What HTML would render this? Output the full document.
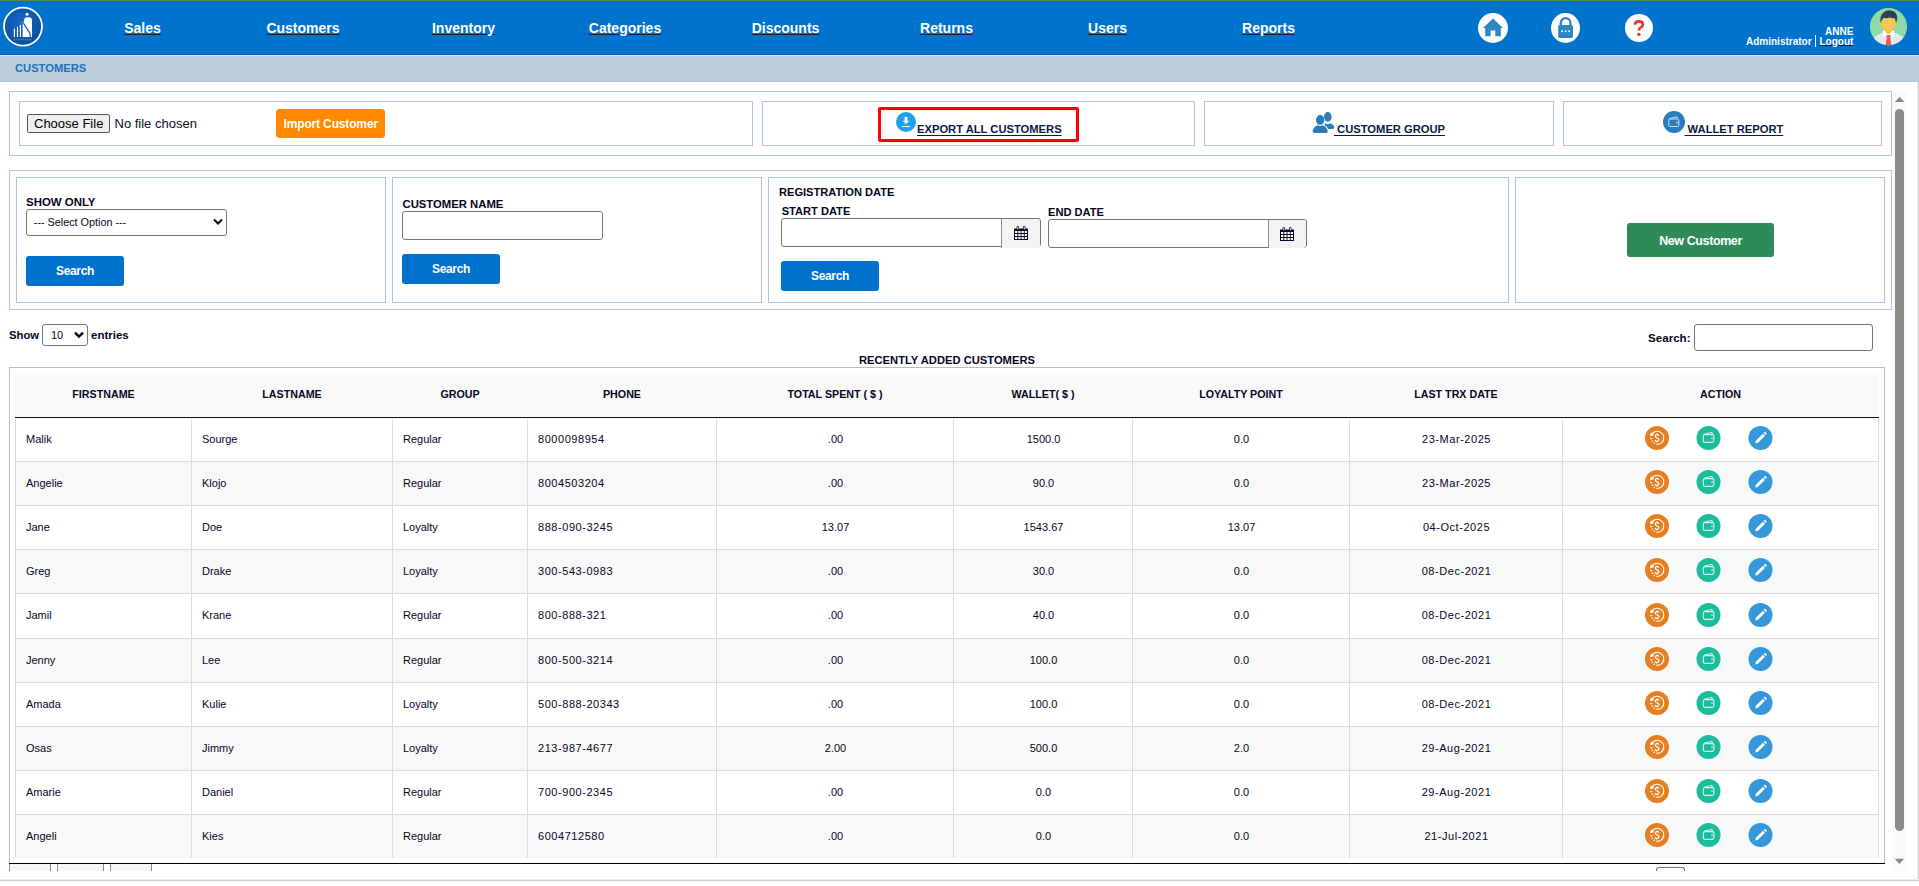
<!DOCTYPE html>
<html><head><meta charset="utf-8">
<style>
*{box-sizing:border-box;margin:0;padding:0}
html,body{width:1919px;height:886px;overflow:hidden;background:#fff;font-family:"Liberation Sans",sans-serif;color:#06061f}
.a{position:absolute}
.t{position:absolute;white-space:nowrap;line-height:1}
.b{font-weight:700}
#topline{left:0;top:0;width:1919px;height:1px;background:#62844f}
#hdr{left:0;top:1px;width:1919px;height:53px;background:#0073cc}
#hdrline{left:0;top:54px;width:1919px;height:1px;background:#0060c2}
#hdrline2{left:0;top:55px;width:1919px;height:1px;background:#d8dde2}
#crumb{left:0;top:56px;width:1919px;height:25px;background:#bccdda}
#crumbline{left:0;top:81px;width:1919px;height:1px;background:#b2c3d2}
.nav{position:absolute;top:21px;width:161px;text-align:center;font-size:14px;font-weight:700;color:#fff;line-height:14px;white-space:nowrap}
.nav span{text-decoration:underline;text-decoration-color:#0d1f45;text-underline-offset:1px}
.box{position:absolute;border:1px solid #b0c4de}
.lnk{font-size:11.2px;font-weight:700;color:#0b1a48;text-decoration:underline;text-underline-offset:1.5px}
.lbl{font-size:11.3px;font-weight:700}
.inp{position:absolute;border:1px solid #767676;border-radius:3px;background:#fff}
.btn{position:absolute;border-radius:3px;background:#0071cd;color:#fff;font-weight:700;font-size:12px;letter-spacing:-0.35px;display:flex;align-items:center;justify-content:center;line-height:1;padding-top:0.8px}
</style></head><body>
<div id="topline" class="a"></div>
<div id="hdr" class="a"></div>
<div id="hdrline" class="a"></div>
<div id="hdrline2" class="a"></div>
<div id="crumb" class="a"></div>
<div id="crumbline" class="a"></div>
<div class="t b" style="left:15px;top:62.6px;font-size:11.2px;color:#1a70c4">CUSTOMERS</div>

<!-- nav -->
<div class="nav" style="left:62px"><span>Sales</span></div>
<div class="nav" style="left:222.5px"><span>Customers</span></div>
<div class="nav" style="left:383px"><span>Inventory</span></div>
<div class="nav" style="left:544.5px"><span>Categories</span></div>
<div class="nav" style="left:705px"><span>Discounts</span></div>
<div class="nav" style="left:866px"><span>Returns</span></div>
<div class="nav" style="left:1027px"><span>Users</span></div>
<div class="nav" style="left:1188px"><span>Reports</span></div>


<!-- logo -->
<svg class="a" style="left:0;top:0" width="46" height="50" viewBox="0 0 46 50">
<defs><radialGradient id="lg" cx="45%" cy="40%" r="60%"><stop offset="0" stop-color="#1769c4"/><stop offset="1" stop-color="#0a4f9e"/></radialGradient></defs>
<circle cx="23" cy="26.6" r="19" fill="url(#lg)" stroke="#fff" stroke-width="1.8"/>
<rect x="13.8" y="28.6" width="1.2" height="8.4" fill="#fff"/>
<rect x="16.9" y="26.8" width="1.2" height="10.2" fill="#fff"/>
<rect x="19.8" y="25" width="1.2" height="12" fill="#fff"/>
<path d="M22.6 22 L22.6 37 L32 37 L32 19.8 Q31.8 17.4 29.5 17.3 L26.6 17.3 Q24.3 17.5 24.1 19.8 L24.1 21.5 Z" fill="#fff"/>
<path d="M22.9 22.4 L29.5 32.6 Q30.3 34 30.3 37.2" fill="none" stroke="#0d5bb0" stroke-width="1.2"/>
<circle cx="27.1" cy="14.2" r="1.5" fill="#fff"/>
<path d="M14 39.6 L32 39.6" stroke="#8fb6e6" stroke-width="1.3" stroke-dasharray="1 1.2" opacity="0.6"/>
</svg>

<!-- header icons -->
<svg class="a" style="left:1478px;top:13px" width="30" height="30" viewBox="0 0 30 30">
<circle cx="15" cy="15" r="15" fill="#fff"/>
<path d="M15 5.5 L25 15 L22.8 15 L22.8 23.2 L17.3 23.2 L17.3 17.5 L12.6 17.5 L12.6 23.2 L7.2 23.2 L7.2 15 L5 15 Z" fill="#2e86c1"/>
</svg>
<svg class="a" style="left:1551px;top:13px" width="29" height="30" viewBox="0 0 29 30">
<ellipse cx="14.5" cy="15" rx="14.5" ry="15" fill="#fff"/>
<path d="M9.75 12.5 L9.75 10 A4.85 4.85 0 0 1 19.45 10 L19.45 12.5" fill="none" stroke="#2e86c1" stroke-width="2.3"/>
<rect x="7.2" y="12" width="14.8" height="13" rx="1.8" fill="#2e86c1"/>
<rect x="10.2" y="17.4" width="1.7" height="1.7" fill="#fff"/>
<rect x="13.75" y="17.4" width="1.7" height="1.7" fill="#fff"/>
<rect x="17.3" y="17.4" width="1.7" height="1.7" fill="#fff"/>
</svg>
<svg class="a" style="left:1625px;top:14px" width="28" height="28" viewBox="0 0 28 28">
<circle cx="14" cy="14" r="14" fill="#fff"/>
<path d="M9.9 10.8 Q10 7.4 13.9 7.4 Q17.9 7.4 17.9 10.4 Q17.9 12.3 15.7 13.4 Q13.9 14.3 13.9 16.6" fill="none" stroke="#e0392b" stroke-width="2.7"/>
<circle cx="13.9" cy="20.4" r="1.7" fill="#e0392b"/>
</svg>

<!-- user -->
<div class="t b" style="left:1825px;top:26.5px;font-size:10px;color:#fff">ANNE</div>
<div class="t b" style="left:1746px;top:37px;font-size:10px;color:#fff">Administrator</div>
<div class="a" style="left:1814.6px;top:34.8px;width:1.8px;height:12px;background:#fff"></div>
<div class="t b" style="left:1819.5px;top:37px;font-size:10px;color:#fff;text-decoration:underline;text-decoration-color:#0d1f45;text-underline-offset:0px">Logout</div>

<!-- avatar -->
<svg class="a" style="left:1870px;top:8px" width="37" height="38" viewBox="0 0 37 38">
<defs><clipPath id="avc"><circle cx="18.5" cy="18.6" r="18.6"/></clipPath></defs>
<circle cx="18.5" cy="18.6" r="18.6" fill="#8fdba7"/>
<g clip-path="url(#avc)">
<path d="M2 40 L4.5 29 Q10 24.5 18.5 23.8 Q27 24.5 33 29 L35 40Z" fill="#e6e8ee"/>
<path d="M14 19 L23 19 L23 24.5 Q18.5 27.5 14 24.5Z" fill="#f5c04e"/>
<path d="M12.8 23 L14.4 22.4 Q16.5 25.5 18.5 26.5 Q20.5 25.5 22.6 22.4 L24.2 23 L24.2 28.6 L18.5 27.5 L12.8 28.6Z" fill="#fdfdfd"/>
<path d="M16.2 27 L20.8 27 L20.2 29 L21.4 38 L15.6 38 L16.8 29Z" fill="#ef5a48"/>
</g>
<ellipse cx="11.8" cy="16.8" rx="1.7" ry="2" fill="#f5c04e"/>
<ellipse cx="25.2" cy="16.8" rx="1.7" ry="2" fill="#f5c04e"/>
<ellipse cx="18.5" cy="15.2" rx="6.6" ry="6.9" fill="#f9c74f"/>
<path d="M10.6 15 Q9.6 7.5 13.5 4.5 Q16.5 1.6 21 2.4 Q26.8 3.2 27.2 9.5 Q27.3 12.5 26 15 Q25.6 11.5 24.5 10 Q22 10.6 19.5 9.4 Q17 10.8 13.6 9.8 Q12.2 11.2 10.6 15Z" fill="#2e4257"/>
</svg>


<!-- content frame -->
<div class="a" style="left:1917px;top:82px;width:1px;height:799px;background:#ececec"></div><div class="a" style="left:1918px;top:82px;width:1px;height:799px;background:#d2d2d2"></div>
<div class="a" style="left:0;top:879px;width:1919px;height:1px;background:#ececec"></div><div class="a" style="left:0;top:880px;width:1919px;height:1px;background:#d0d0d0"></div>
<!-- scrollbar -->
<div class="a" style="left:1892px;top:91px;width:15px;height:780px;background:#fafafa"></div>
<svg class="a" style="left:1893px;top:95px" width="14" height="9" viewBox="0 0 14 9"><path d="M1.8 7 L6.6 1.8 L11.4 7Z" fill="#8b8b8b"/></svg>
<div class="a" style="left:1895px;top:109px;width:9px;height:722px;background:#8b8b8b;border-radius:4.5px"></div>
<svg class="a" style="left:1892px;top:857px" width="14" height="9" viewBox="0 0 14 9"><path d="M2.8 1.8 L7.4 7 L12 1.8Z" fill="#8b8b8b"/></svg>

<!-- export row -->
<div class="box" style="left:9px;top:91px;width:1883px;height:65px"></div>
<div class="box" style="left:19px;top:101px;width:734px;height:45px"></div>
<div class="box" style="left:762px;top:101px;width:433px;height:45px"></div>
<div class="box" style="left:1204px;top:101px;width:350px;height:45px"></div>
<div class="box" style="left:1563px;top:101px;width:319px;height:45px"></div>

<div class="a" style="left:27px;top:114px;width:83px;height:19px;border:1px solid #555;border-radius:2px;background:#efefef"></div>
<div class="t" style="left:34px;top:117px;font-size:13px;color:#000">Choose File</div>
<div class="t" style="left:114.5px;top:117px;font-size:13px;color:#0b0b26">No file chosen</div>
<div class="a" style="left:276px;top:109px;width:109px;height:29px;border-radius:3.5px;background:#ff8a00"></div>
<div class="t b" style="left:283.5px;top:117.8px;font-size:12px;letter-spacing:-0.15px;color:#fff">Import Customer</div>

<div class="a" style="left:878px;top:107px;width:201px;height:35px;border:3px solid #ff0000;border-radius:2px"></div>
<svg class="a" style="left:896px;top:112px" width="20" height="20" viewBox="0 0 20 20">
<circle cx="10" cy="10" r="10" fill="#1ba2ee"/>
<path d="M8.6 5 L11.4 5 L11.4 8.8 L13.4 8.8 L10 12 L6.6 8.8 L8.6 8.8Z" fill="#fff"/>
<rect x="6.2" y="13.9" width="7.6" height="1.2" fill="#fff"/>
</svg>
<div class="t lnk" style="left:917px;top:124px">EXPORT ALL CUSTOMERS</div>

<svg class="a" style="left:1312px;top:111px" width="23" height="23" viewBox="0 0 23 23">
<ellipse cx="15.8" cy="5.9" rx="3.8" ry="4.8" fill="#2b7bbd"/>
<path d="M13.2 12.3 Q15.8 14 18.4 12.3 Q22.3 14.3 22.3 16.6 Q22.3 17.9 20.4 17.9 L16.2 17.9 Q15.2 15.3 12.4 14.2Z" fill="#2b7bbd"/>
<ellipse cx="8.2" cy="9" rx="4.6" ry="5.4" fill="#fff"/>
<path d="M0 20.8 Q0.3 15.6 5.6 13.6 Q8.2 15.4 10.8 13.6 Q16.2 15.6 16.4 20.8 Q16.3 22.6 14 22.6 L2.4 22.6 Q0 22.6 0 20.8Z" fill="#fff"/>
<ellipse cx="8.2" cy="9" rx="4.2" ry="5" fill="#2b7bbd"/>
<path d="M0.6 20.6 Q0.9 16 5.7 14.2 Q8.2 15.8 10.7 14.2 Q15.5 16 15.8 20.6 Q15.7 22 13.8 22 L2.6 22 Q0.6 22 0.6 20.6Z" fill="#2b7bbd"/>
</svg>
<div class="t lnk" style="left:1334px;top:124px">&nbsp;CUSTOMER GROUP</div>

<svg class="a" style="left:1663px;top:111px" width="22" height="22" viewBox="0 0 22 22">
<circle cx="11" cy="11" r="11" fill="#2b7bbd"/>
<rect x="5.8" y="8" width="10" height="7.5" rx="1.4" fill="none" stroke="#d0e3f2" stroke-width="1"/>
<path d="M6.6 7.6 L13.8 5.8 L14.3 7.6" fill="none" stroke="#d0e3f2" stroke-width="1"/>
<rect x="13.2" y="10.6" width="1.3" height="1.8" fill="#d0e3f2"/>
</svg>
<div class="t lnk" style="left:1684.5px;top:124px">&nbsp;WALLET REPORT</div>


<!-- filters -->
<div class="box" style="left:9px;top:170px;width:1883px;height:140px"></div>
<div class="box" style="left:16px;top:177px;width:370px;height:126px"></div>
<div class="box" style="left:392px;top:177px;width:370px;height:126px"></div>
<div class="box" style="left:768px;top:177px;width:741px;height:126px"></div>
<div class="box" style="left:1515px;top:177px;width:370px;height:126px"></div>

<div class="t lbl" style="left:26px;top:197px;font-size:11.45px">SHOW ONLY</div>
<div class="inp" style="left:26px;top:209px;width:201px;height:27px"></div>
<div class="t" style="left:33.8px;top:216.6px;font-size:10.8px">--- Select Option ---</div>
<svg class="a" style="left:213px;top:218px" width="10" height="8" viewBox="0 0 10 8"><path d="M1 1.5 L5 5.5 L9 1.5" fill="none" stroke="#0b0b26" stroke-width="2"/></svg>
<div class="btn" style="left:26px;top:256px;width:98px;height:30px">Search</div>

<div class="t lbl" style="left:402.5px;top:198.8px">CUSTOMER NAME</div>
<div class="inp" style="left:402px;top:211px;width:201px;height:28.5px"></div>
<div class="btn" style="left:402px;top:254px;width:98px;height:30px">Search</div>

<div class="t lbl" style="left:779px;top:187.2px;font-size:11.1px">REGISTRATION DATE</div>
<div class="t lbl" style="left:781.7px;top:205.6px;font-size:11.1px">START DATE</div>
<div class="inp" style="left:781px;top:218px;width:260px;height:29px"></div>
<div class="a" style="left:1001px;top:219px;width:39px;height:29px;background:#f3f3f3;border-left:1px solid #8a8a8a;border-radius:0 3px 3px 0"></div>
<svg class="a" style="left:1014px;top:226px" width="14" height="14" viewBox="0 0 14 14">
<path d="M0 2.5 L14 2.5 L14 14 L0 14Z" fill="#0b0b26"/>
<rect x="2.6" y="0" width="2.3" height="4" rx="1" fill="#0b0b26"/><rect x="9.1" y="0" width="2.3" height="4" rx="1" fill="#0b0b26"/>
<rect x="3.3" y="0.8" width="1" height="2.6" fill="#f3f3f3"/><rect x="9.8" y="0.8" width="1" height="2.6" fill="#f3f3f3"/>
<g fill="#fff"><rect x="1" y="5" width="2.3" height="2"/><rect x="4.3" y="5" width="2.3" height="2"/><rect x="7.5" y="5" width="2.3" height="2"/><rect x="10.7" y="5" width="2.3" height="2"/>
<rect x="1" y="8" width="2.3" height="2"/><rect x="4.3" y="8" width="2.3" height="2"/><rect x="7.5" y="8" width="2.3" height="2"/><rect x="10.7" y="8" width="2.3" height="2"/>
<rect x="1" y="11" width="2.3" height="2"/><rect x="4.3" y="11" width="2.3" height="2"/><rect x="7.5" y="11" width="2.3" height="2"/><rect x="10.7" y="11" width="2.3" height="2"/></g>
</svg>
<div class="t lbl" style="left:1048px;top:206.9px;font-size:11.1px">END DATE</div>
<div class="inp" style="left:1048px;top:219px;width:259px;height:29px"></div>
<div class="a" style="left:1268px;top:220px;width:38px;height:28px;background:#f3f3f3;border-left:1px solid #8a8a8a;border-radius:0 3px 3px 0"></div>
<svg class="a" style="left:1280px;top:227px" width="14" height="14" viewBox="0 0 14 14">
<path d="M0 2.5 L14 2.5 L14 14 L0 14Z" fill="#0b0b26"/>
<rect x="2.6" y="0" width="2.3" height="4" rx="1" fill="#0b0b26"/><rect x="9.1" y="0" width="2.3" height="4" rx="1" fill="#0b0b26"/>
<rect x="3.3" y="0.8" width="1" height="2.6" fill="#f3f3f3"/><rect x="9.8" y="0.8" width="1" height="2.6" fill="#f3f3f3"/>
<g fill="#fff"><rect x="1" y="5" width="2.3" height="2"/><rect x="4.3" y="5" width="2.3" height="2"/><rect x="7.5" y="5" width="2.3" height="2"/><rect x="10.7" y="5" width="2.3" height="2"/>
<rect x="1" y="8" width="2.3" height="2"/><rect x="4.3" y="8" width="2.3" height="2"/><rect x="7.5" y="8" width="2.3" height="2"/><rect x="10.7" y="8" width="2.3" height="2"/>
<rect x="1" y="11" width="2.3" height="2"/><rect x="4.3" y="11" width="2.3" height="2"/><rect x="7.5" y="11" width="2.3" height="2"/><rect x="10.7" y="11" width="2.3" height="2"/></g>
</svg>
<div class="btn" style="left:781px;top:261px;width:98px;height:29.5px">Search</div>

<div class="btn" style="left:1627px;top:223px;width:147px;height:34px;background:#2e8b57;font-size:12.5px;letter-spacing:-0.4px;padding-top:2.5px">New Customer</div>


<svg width="0" height="0" style="position:absolute">
<defs>
<g id="ic1"><circle cx="12" cy="12" r="12" fill="#e67e22"/>
<path d="M6.9 8.2 A6.5 6.5 0 1 1 11.4 18.3" fill="none" stroke="#fff" stroke-width="1.25"/>
<path d="M4.9 10.4 L5.9 6.3 L9.3 8.9Z" fill="#fff"/>
<rect x="5.2" y="12" width="2" height="1.2" fill="#fff"/><rect x="6.6" y="14.6" width="1.6" height="1.2" fill="#fff"/><rect x="8.6" y="16.6" width="1.3" height="1.3" fill="#fff"/>
<path d="M13.9 9.6 Q13.5 8.6 12 8.6 Q10.3 8.6 10.3 10.1 Q10.3 11.4 12 11.8 Q13.9 12.3 13.9 13.8 Q13.9 15.3 12 15.3 Q10.4 15.3 10 14.2 M12 7.4 L12 8.7 M12 15.2 L12 16.5" fill="none" stroke="#fff" stroke-width="1.25"/></g>
<g id="ic2"><circle cx="12.5" cy="12" r="12" fill="#1abc9c"/>
<rect x="7.3" y="8.6" width="10.6" height="7.8" rx="1.6" fill="none" stroke="#d8f3ec" stroke-width="1.1"/>
<path d="M8 8.3 L15.8 6.3 L16.3 8.4" fill="none" stroke="#d8f3ec" stroke-width="1.1"/>
<rect x="15.3" y="11.5" width="1.3" height="1.6" fill="#d8f3ec"/></g>
<g id="ic3"><circle cx="12.5" cy="12" r="12" fill="#3498db"/>
<path d="M7.2 17.6 L8 14.6 L14.9 7.7 L17 9.8 L10.1 16.7Z" fill="#fff"/>
<path d="M15.7 6.9 L16.5 6.1 Q17 5.6 17.6 6.2 L18.6 7.2 Q19.1 7.7 18.6 8.2 L17.8 9Z" fill="#fff"/></g>
</defs></svg>
<div class="t b" style="left:9px;top:330px;font-size:11.3px">Show</div>
<div class="inp" style="left:42px;top:324px;width:46px;height:22px"></div>
<div class="t" style="left:51px;top:329.8px;font-size:11px">10</div>
<svg class="a" style="left:74px;top:331px" width="10" height="8" viewBox="0 0 10 8"><path d="M1 1.6 L5 5.6 L9 1.6" fill="none" stroke="#06061f" stroke-width="2.3"/></svg>
<div class="t b" style="left:91px;top:330px;font-size:11.5px">entries</div>
<div class="t b" style="left:1648px;top:332.3px;font-size:11.6px">Search:</div>
<div class="inp" style="left:1694px;top:324px;width:179px;height:26.5px"></div>
<div class="t b" style="left:859px;top:354.7px;font-size:11.2px">RECENTLY ADDED CUSTOMERS</div>

<div class="a" style="left:9px;top:367px;width:1876px;height:497px;border:1px solid #bdbdbd;border-bottom:none"></div>
<div class="a" style="left:15px;top:373px;width:1864px;height:44px;background:#f9f9f9"></div>
<div class="a" style="left:15px;top:417px;width:1864px;height:1.4px;background:#111"></div>

<div class="t b" style="left:15.5px;top:389px;width:176px;text-align:center;font-size:10.7px">FIRSTNAME</div>
<div class="t b" style="left:191.5px;top:389px;width:201px;text-align:center;font-size:10.7px">LASTNAME</div>
<div class="t b" style="left:392.5px;top:389px;width:135px;text-align:center;font-size:10.7px">GROUP</div>
<div class="t b" style="left:527.5px;top:389px;width:189px;text-align:center;font-size:10.7px">PHONE</div>
<div class="t b" style="left:716.5px;top:389px;width:237px;text-align:center;font-size:10.7px">TOTAL SPENT ( &#36; )</div>
<div class="t b" style="left:953.5px;top:389px;width:179px;text-align:center;font-size:10.7px">WALLET( &#36; )</div>
<div class="t b" style="left:1132.5px;top:389px;width:217px;text-align:center;font-size:10.7px">LOYALTY POINT</div>
<div class="t b" style="left:1349.5px;top:389px;width:213px;text-align:center;font-size:10.7px">LAST TRX DATE</div>
<div class="t b" style="left:1562.5px;top:389px;width:316px;text-align:center;font-size:10.7px">ACTION</div>
<div class="a" style="left:15px;top:418px;width:1864px;height:43px;background:#fff"></div>
<div class="t" style="left:26px;top:434.4px;font-size:11px;letter-spacing:0">Malik</div>
<div class="t" style="left:202px;top:434.4px;font-size:11px;letter-spacing:0">Sourge</div>
<div class="t" style="left:403px;top:434.4px;font-size:11px;letter-spacing:0">Regular</div>
<div class="t" style="left:538px;top:434.4px;font-size:11px;letter-spacing:0.55px">8000098954</div>
<div class="t" style="left:717px;top:434.4px;width:237px;text-align:center;font-size:11px;letter-spacing:0">.00</div>
<div class="t" style="left:954px;top:434.4px;width:179px;text-align:center;font-size:11px;letter-spacing:0">1500.0</div>
<div class="t" style="left:1133px;top:434.4px;width:217px;text-align:center;font-size:11px;letter-spacing:0">0.0</div>
<div class="t" style="left:1350px;top:434.4px;width:213px;text-align:center;font-size:11px;letter-spacing:0.55px">23-Mar-2025</div>
<svg class="a" style="left:1645px;top:425.9px" width="24" height="24" viewBox="0 0 24 24"><use href="#ic1"/></svg><svg class="a" style="left:1696px;top:425.9px" width="25" height="24" viewBox="0 0 25 24"><use href="#ic2"/></svg><svg class="a" style="left:1748px;top:425.9px" width="25" height="24" viewBox="0 0 25 24"><use href="#ic3"/></svg>
<div class="a" style="left:15px;top:461px;width:1864px;height:44px;background:#f7f8f8"></div>
<div class="t" style="left:26px;top:477.9px;font-size:11px;letter-spacing:0">Angelie</div>
<div class="t" style="left:202px;top:477.9px;font-size:11px;letter-spacing:0">Klojo</div>
<div class="t" style="left:403px;top:477.9px;font-size:11px;letter-spacing:0">Regular</div>
<div class="t" style="left:538px;top:477.9px;font-size:11px;letter-spacing:0.55px">8004503204</div>
<div class="t" style="left:717px;top:477.9px;width:237px;text-align:center;font-size:11px;letter-spacing:0">.00</div>
<div class="t" style="left:954px;top:477.9px;width:179px;text-align:center;font-size:11px;letter-spacing:0">90.0</div>
<div class="t" style="left:1133px;top:477.9px;width:217px;text-align:center;font-size:11px;letter-spacing:0">0.0</div>
<div class="t" style="left:1350px;top:477.9px;width:213px;text-align:center;font-size:11px;letter-spacing:0.55px">23-Mar-2025</div>
<svg class="a" style="left:1645px;top:470.0px" width="24" height="24" viewBox="0 0 24 24"><use href="#ic1"/></svg><svg class="a" style="left:1696px;top:470.0px" width="25" height="24" viewBox="0 0 25 24"><use href="#ic2"/></svg><svg class="a" style="left:1748px;top:470.0px" width="25" height="24" viewBox="0 0 25 24"><use href="#ic3"/></svg>
<div class="a" style="left:15px;top:505px;width:1864px;height:44px;background:#fff"></div>
<div class="t" style="left:26px;top:521.9px;font-size:11px;letter-spacing:0">Jane</div>
<div class="t" style="left:202px;top:521.9px;font-size:11px;letter-spacing:0">Doe</div>
<div class="t" style="left:403px;top:521.9px;font-size:11px;letter-spacing:0">Loyalty</div>
<div class="t" style="left:538px;top:521.9px;font-size:11px;letter-spacing:0.55px">888-090-3245</div>
<div class="t" style="left:717px;top:521.9px;width:237px;text-align:center;font-size:11px;letter-spacing:0">13.07</div>
<div class="t" style="left:954px;top:521.9px;width:179px;text-align:center;font-size:11px;letter-spacing:0">1543.67</div>
<div class="t" style="left:1133px;top:521.9px;width:217px;text-align:center;font-size:11px;letter-spacing:0">13.07</div>
<div class="t" style="left:1350px;top:521.9px;width:213px;text-align:center;font-size:11px;letter-spacing:0.55px">04-Oct-2025</div>
<svg class="a" style="left:1645px;top:514.2px" width="24" height="24" viewBox="0 0 24 24"><use href="#ic1"/></svg><svg class="a" style="left:1696px;top:514.2px" width="25" height="24" viewBox="0 0 25 24"><use href="#ic2"/></svg><svg class="a" style="left:1748px;top:514.2px" width="25" height="24" viewBox="0 0 25 24"><use href="#ic3"/></svg>
<div class="a" style="left:15px;top:549px;width:1864px;height:44px;background:#f7f8f8"></div>
<div class="t" style="left:26px;top:565.9px;font-size:11px;letter-spacing:0">Greg</div>
<div class="t" style="left:202px;top:565.9px;font-size:11px;letter-spacing:0">Drake</div>
<div class="t" style="left:403px;top:565.9px;font-size:11px;letter-spacing:0">Loyalty</div>
<div class="t" style="left:538px;top:565.9px;font-size:11px;letter-spacing:0.55px">300-543-0983</div>
<div class="t" style="left:717px;top:565.9px;width:237px;text-align:center;font-size:11px;letter-spacing:0">.00</div>
<div class="t" style="left:954px;top:565.9px;width:179px;text-align:center;font-size:11px;letter-spacing:0">30.0</div>
<div class="t" style="left:1133px;top:565.9px;width:217px;text-align:center;font-size:11px;letter-spacing:0">0.0</div>
<div class="t" style="left:1350px;top:565.9px;width:213px;text-align:center;font-size:11px;letter-spacing:0.55px">08-Dec-2021</div>
<svg class="a" style="left:1645px;top:558.3px" width="24" height="24" viewBox="0 0 24 24"><use href="#ic1"/></svg><svg class="a" style="left:1696px;top:558.3px" width="25" height="24" viewBox="0 0 25 24"><use href="#ic2"/></svg><svg class="a" style="left:1748px;top:558.3px" width="25" height="24" viewBox="0 0 25 24"><use href="#ic3"/></svg>
<div class="a" style="left:15px;top:593px;width:1864px;height:45px;background:#fff"></div>
<div class="t" style="left:26px;top:610.4px;font-size:11px;letter-spacing:0">Jamil</div>
<div class="t" style="left:202px;top:610.4px;font-size:11px;letter-spacing:0">Krane</div>
<div class="t" style="left:403px;top:610.4px;font-size:11px;letter-spacing:0">Regular</div>
<div class="t" style="left:538px;top:610.4px;font-size:11px;letter-spacing:0.55px">800-888-321</div>
<div class="t" style="left:717px;top:610.4px;width:237px;text-align:center;font-size:11px;letter-spacing:0">.00</div>
<div class="t" style="left:954px;top:610.4px;width:179px;text-align:center;font-size:11px;letter-spacing:0">40.0</div>
<div class="t" style="left:1133px;top:610.4px;width:217px;text-align:center;font-size:11px;letter-spacing:0">0.0</div>
<div class="t" style="left:1350px;top:610.4px;width:213px;text-align:center;font-size:11px;letter-spacing:0.55px">08-Dec-2021</div>
<svg class="a" style="left:1645px;top:602.5px" width="24" height="24" viewBox="0 0 24 24"><use href="#ic1"/></svg><svg class="a" style="left:1696px;top:602.5px" width="25" height="24" viewBox="0 0 25 24"><use href="#ic2"/></svg><svg class="a" style="left:1748px;top:602.5px" width="25" height="24" viewBox="0 0 25 24"><use href="#ic3"/></svg>
<div class="a" style="left:15px;top:638px;width:1864px;height:44px;background:#f7f8f8"></div>
<div class="t" style="left:26px;top:654.9px;font-size:11px;letter-spacing:0">Jenny</div>
<div class="t" style="left:202px;top:654.9px;font-size:11px;letter-spacing:0">Lee</div>
<div class="t" style="left:403px;top:654.9px;font-size:11px;letter-spacing:0">Regular</div>
<div class="t" style="left:538px;top:654.9px;font-size:11px;letter-spacing:0.55px">800-500-3214</div>
<div class="t" style="left:717px;top:654.9px;width:237px;text-align:center;font-size:11px;letter-spacing:0">.00</div>
<div class="t" style="left:954px;top:654.9px;width:179px;text-align:center;font-size:11px;letter-spacing:0">100.0</div>
<div class="t" style="left:1133px;top:654.9px;width:217px;text-align:center;font-size:11px;letter-spacing:0">0.0</div>
<div class="t" style="left:1350px;top:654.9px;width:213px;text-align:center;font-size:11px;letter-spacing:0.55px">08-Dec-2021</div>
<svg class="a" style="left:1645px;top:646.6px" width="24" height="24" viewBox="0 0 24 24"><use href="#ic1"/></svg><svg class="a" style="left:1696px;top:646.6px" width="25" height="24" viewBox="0 0 25 24"><use href="#ic2"/></svg><svg class="a" style="left:1748px;top:646.6px" width="25" height="24" viewBox="0 0 25 24"><use href="#ic3"/></svg>
<div class="a" style="left:15px;top:682px;width:1864px;height:44px;background:#fff"></div>
<div class="t" style="left:26px;top:698.9px;font-size:11px;letter-spacing:0">Amada</div>
<div class="t" style="left:202px;top:698.9px;font-size:11px;letter-spacing:0">Kulie</div>
<div class="t" style="left:403px;top:698.9px;font-size:11px;letter-spacing:0">Loyalty</div>
<div class="t" style="left:538px;top:698.9px;font-size:11px;letter-spacing:0.55px">500-888-20343</div>
<div class="t" style="left:717px;top:698.9px;width:237px;text-align:center;font-size:11px;letter-spacing:0">.00</div>
<div class="t" style="left:954px;top:698.9px;width:179px;text-align:center;font-size:11px;letter-spacing:0">100.0</div>
<div class="t" style="left:1133px;top:698.9px;width:217px;text-align:center;font-size:11px;letter-spacing:0">0.0</div>
<div class="t" style="left:1350px;top:698.9px;width:213px;text-align:center;font-size:11px;letter-spacing:0.55px">08-Dec-2021</div>
<svg class="a" style="left:1645px;top:690.8px" width="24" height="24" viewBox="0 0 24 24"><use href="#ic1"/></svg><svg class="a" style="left:1696px;top:690.8px" width="25" height="24" viewBox="0 0 25 24"><use href="#ic2"/></svg><svg class="a" style="left:1748px;top:690.8px" width="25" height="24" viewBox="0 0 25 24"><use href="#ic3"/></svg>
<div class="a" style="left:15px;top:726px;width:1864px;height:44px;background:#f7f8f8"></div>
<div class="t" style="left:26px;top:742.9px;font-size:11px;letter-spacing:0">Osas</div>
<div class="t" style="left:202px;top:742.9px;font-size:11px;letter-spacing:0">Jimmy</div>
<div class="t" style="left:403px;top:742.9px;font-size:11px;letter-spacing:0">Loyalty</div>
<div class="t" style="left:538px;top:742.9px;font-size:11px;letter-spacing:0.55px">213-987-4677</div>
<div class="t" style="left:717px;top:742.9px;width:237px;text-align:center;font-size:11px;letter-spacing:0">2.00</div>
<div class="t" style="left:954px;top:742.9px;width:179px;text-align:center;font-size:11px;letter-spacing:0">500.0</div>
<div class="t" style="left:1133px;top:742.9px;width:217px;text-align:center;font-size:11px;letter-spacing:0">2.0</div>
<div class="t" style="left:1350px;top:742.9px;width:213px;text-align:center;font-size:11px;letter-spacing:0.55px">29-Aug-2021</div>
<svg class="a" style="left:1645px;top:735.0px" width="24" height="24" viewBox="0 0 24 24"><use href="#ic1"/></svg><svg class="a" style="left:1696px;top:735.0px" width="25" height="24" viewBox="0 0 25 24"><use href="#ic2"/></svg><svg class="a" style="left:1748px;top:735.0px" width="25" height="24" viewBox="0 0 25 24"><use href="#ic3"/></svg>
<div class="a" style="left:15px;top:770px;width:1864px;height:44px;background:#fff"></div>
<div class="t" style="left:26px;top:786.9px;font-size:11px;letter-spacing:0">Amarie</div>
<div class="t" style="left:202px;top:786.9px;font-size:11px;letter-spacing:0">Daniel</div>
<div class="t" style="left:403px;top:786.9px;font-size:11px;letter-spacing:0">Regular</div>
<div class="t" style="left:538px;top:786.9px;font-size:11px;letter-spacing:0.55px">700-900-2345</div>
<div class="t" style="left:717px;top:786.9px;width:237px;text-align:center;font-size:11px;letter-spacing:0">.00</div>
<div class="t" style="left:954px;top:786.9px;width:179px;text-align:center;font-size:11px;letter-spacing:0">0.0</div>
<div class="t" style="left:1133px;top:786.9px;width:217px;text-align:center;font-size:11px;letter-spacing:0">0.0</div>
<div class="t" style="left:1350px;top:786.9px;width:213px;text-align:center;font-size:11px;letter-spacing:0.55px">29-Aug-2021</div>
<svg class="a" style="left:1645px;top:779.1px" width="24" height="24" viewBox="0 0 24 24"><use href="#ic1"/></svg><svg class="a" style="left:1696px;top:779.1px" width="25" height="24" viewBox="0 0 25 24"><use href="#ic2"/></svg><svg class="a" style="left:1748px;top:779.1px" width="25" height="24" viewBox="0 0 25 24"><use href="#ic3"/></svg>
<div class="a" style="left:15px;top:814px;width:1864px;height:44px;background:#f7f8f8"></div>
<div class="t" style="left:26px;top:830.9px;font-size:11px;letter-spacing:0">Angeli</div>
<div class="t" style="left:202px;top:830.9px;font-size:11px;letter-spacing:0">Kies</div>
<div class="t" style="left:403px;top:830.9px;font-size:11px;letter-spacing:0">Regular</div>
<div class="t" style="left:538px;top:830.9px;font-size:11px;letter-spacing:0.55px">6004712580</div>
<div class="t" style="left:717px;top:830.9px;width:237px;text-align:center;font-size:11px;letter-spacing:0">.00</div>
<div class="t" style="left:954px;top:830.9px;width:179px;text-align:center;font-size:11px;letter-spacing:0">0.0</div>
<div class="t" style="left:1133px;top:830.9px;width:217px;text-align:center;font-size:11px;letter-spacing:0">0.0</div>
<div class="t" style="left:1350px;top:830.9px;width:213px;text-align:center;font-size:11px;letter-spacing:0.55px">21-Jul-2021</div>
<svg class="a" style="left:1645px;top:823.2px" width="24" height="24" viewBox="0 0 24 24"><use href="#ic1"/></svg><svg class="a" style="left:1696px;top:823.2px" width="25" height="24" viewBox="0 0 25 24"><use href="#ic2"/></svg><svg class="a" style="left:1748px;top:823.2px" width="25" height="24" viewBox="0 0 25 24"><use href="#ic3"/></svg>
<div class="a" style="left:15px;top:461px;width:1864px;height:1px;background:#dcdcdc"></div>
<div class="a" style="left:15px;top:505px;width:1864px;height:1px;background:#dcdcdc"></div>
<div class="a" style="left:15px;top:549px;width:1864px;height:1px;background:#dcdcdc"></div>
<div class="a" style="left:15px;top:593px;width:1864px;height:1px;background:#dcdcdc"></div>
<div class="a" style="left:15px;top:638px;width:1864px;height:1px;background:#dcdcdc"></div>
<div class="a" style="left:15px;top:682px;width:1864px;height:1px;background:#dcdcdc"></div>
<div class="a" style="left:15px;top:726px;width:1864px;height:1px;background:#dcdcdc"></div>
<div class="a" style="left:15px;top:770px;width:1864px;height:1px;background:#dcdcdc"></div>
<div class="a" style="left:15px;top:814px;width:1864px;height:1px;background:#dcdcdc"></div>
<div class="a" style="left:15px;top:419px;width:1px;height:439px;background:#dcdcdc"></div>
<div class="a" style="left:191px;top:419px;width:1px;height:439px;background:#dcdcdc"></div>
<div class="a" style="left:392px;top:419px;width:1px;height:439px;background:#dcdcdc"></div>
<div class="a" style="left:527px;top:419px;width:1px;height:439px;background:#dcdcdc"></div>
<div class="a" style="left:716px;top:419px;width:1px;height:439px;background:#dcdcdc"></div>
<div class="a" style="left:953px;top:419px;width:1px;height:439px;background:#dcdcdc"></div>
<div class="a" style="left:1132px;top:419px;width:1px;height:439px;background:#dcdcdc"></div>
<div class="a" style="left:1349px;top:419px;width:1px;height:439px;background:#dcdcdc"></div>
<div class="a" style="left:1562px;top:419px;width:1px;height:439px;background:#dcdcdc"></div>
<div class="a" style="left:1878px;top:419px;width:1px;height:439px;background:#dcdcdc"></div>
<div class="a" style="left:9px;top:863px;width:1876px;height:1.3px;background:#000"></div>
<div class="a" style="left:9px;top:864px;width:42px;height:7px;border-left:1px solid #8c8c8c;border-right:1px solid #8c8c8c;background:#f5f5f5"></div>
<div class="a" style="left:57px;top:864px;width:47px;height:7px;border-left:1px solid #8c8c8c;border-right:1px solid #8c8c8c;background:#f5f5f5"></div>
<div class="a" style="left:110px;top:864px;width:42px;height:7px;border-left:1px solid #8c8c8c;border-right:1px solid #8c8c8c;background:#f5f5f5"></div>
<div class="a" style="left:1656px;top:867px;width:29px;height:4px;border:1px solid #777;border-bottom:none;border-radius:3px 3px 0 0"></div>


<!--CONTENT-->
</body></html>
